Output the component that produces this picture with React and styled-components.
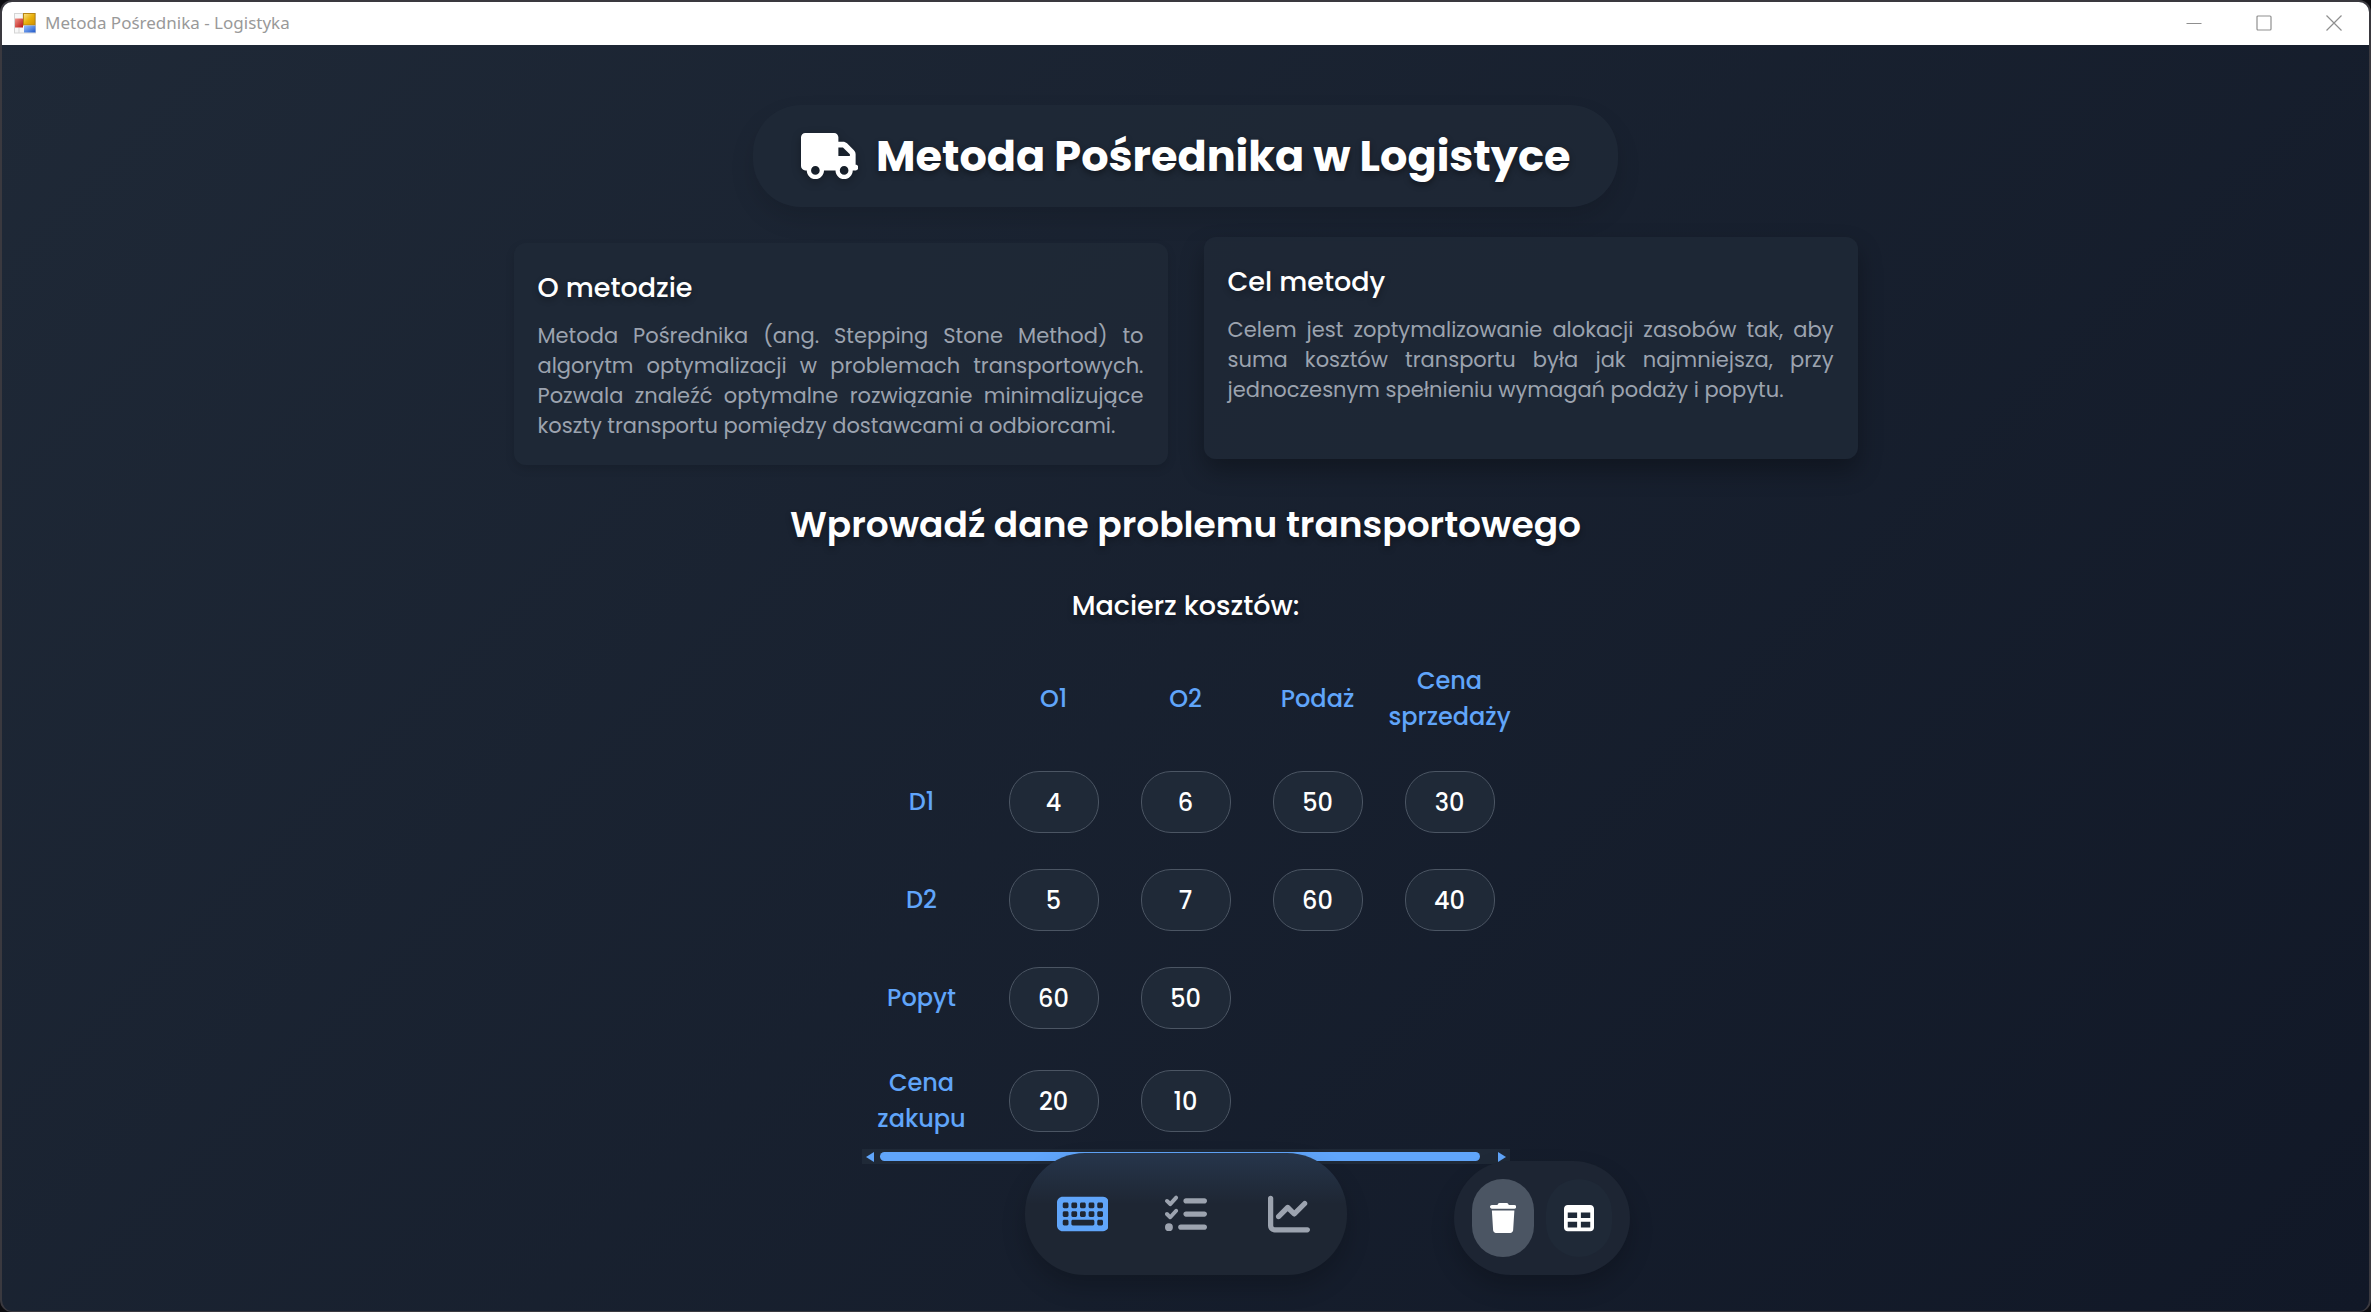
import React, { useState } from "react";
import styled, { createGlobalStyle, css } from "styled-components";
import {
  FaTruck,
  FaKeyboard,
  FaListCheck,
  FaChartLine,
  FaTrash,
  FaTable,
} from "react-icons/fa6";

const color = {
  surface: "#1f2937",
  night: "#111827",
  border: "#4b5563",
  muted: "#9ca3af",
  accent: "#60a5fa",
  text: "#ffffff",
  frame: "#3a393f",
};

const panel = css`
  background: rgba(31, 41, 55, 0.8);
`;

const GlobalStyle = createGlobalStyle`
  *, *::before, *::after { box-sizing: border-box; }
  body {
    margin: 0;
    background: #0c0c10;
    color: ${color.text};
    font-family: Poppins, Montserrat, Inter, sans-serif;
  }
  h1, h2, h3, p { margin: 0; }
  button, input { font: inherit; color: inherit; }
  button { border: 0; padding: 0; background: none; cursor: pointer; }
`;

/* Font Awesome drawings are 512 units high; $units is how wide this one is. */
const Symbol = styled.span`
  display: flex;
  font-size: ${(p) => p.$size}px;
  filter: ${(p) =>
    p.$shadow ? "drop-shadow(0 3px 4px rgba(0, 0, 0, 0.3))" : "none"};

  svg {
    width: calc(1em * ${(p) => p.$units} / 512);
    height: 1em;
  }
`;

const Window = styled.div`
  position: relative;
  display: flex;
  flex-direction: column;
  height: 100vh;
  overflow: hidden;
  border: 2px solid ${color.frame};
  border-bottom-width: 1px;
  border-radius: 12px;
  background: linear-gradient(135deg, ${color.surface}, ${color.night});
`;

const TitleBar = styled.header`
  display: flex;
  flex: none;
  align-items: center;
  height: 43px;
  padding-left: 12px;
  background: #ffffff;
  color: #999999;
`;

const WindowTitle = styled.span`
  flex: 1;
  margin-left: 9px;
  padding-bottom: 2px;
  font-family: "Noto Sans", "Open Sans", sans-serif;
  font-size: 17px;
  line-height: 24px;
`;

const WindowButton = styled.button`
  display: grid;
  place-items: center;
  width: 70px;
  height: 43px;
  padding-bottom: 2px;
`;

const Content = styled.main`
  display: flex;
  flex-direction: column;
  align-items: center;
  padding: 60px 24px 0;
`;

const Banner = styled.div`
  ${panel}
  display: flex;
  align-items: center;
  gap: 18px;
  padding: 15px 48px;
  border-radius: 48px;
  box-shadow: 0 12px 24px rgba(0, 0, 0, 0.12);
`;

const PageTitle = styled.h1`
  font-size: 43px;
  font-weight: 700;
  line-height: 72px;
  text-shadow: 0 3px 6px rgba(0, 0, 0, 0.4);
`;

const Cards = styled.div`
  display: grid;
  grid-template-columns: 1fr 1fr;
  gap: 36px;
  width: 100%;
  max-width: 1344px;
  margin-top: 36px;
`;

const Card = styled.section`
  ${panel}
  padding: 24px;
  border-radius: 12px;
  box-shadow: ${(p) =>
    p.$raised
      ? "0 12px 24px rgba(0, 0, 0, 0.3)"
      : "0 4px 10px rgba(0, 0, 0, 0.12)"};
  transform: ${(p) => (p.$raised ? "translateY(-6px)" : "none")};
`;

const Subtitle = styled.h3`
  font-size: 27px;
  font-weight: 500;
  line-height: 42px;
  text-shadow: 0 3px 6px rgba(0, 0, 0, 0.3);
`;

const CardText = styled.p`
  margin-top: 12px;
  color: ${color.muted};
  font-size: 21px;
  line-height: 30px;
  text-align: justify;
`;

const SectionTitle = styled.h2`
  margin: 36px 0;
  font-size: 36px;
  font-weight: 600;
  line-height: 48px;
  text-shadow: 0 3px 6px rgba(0, 0, 0, 0.3);
`;

const Matrix = styled.table`
  width: 660px;
  margin-top: 18px;
  table-layout: fixed;
  border-collapse: collapse;
  font-size: 24px;
  font-weight: 500;
  line-height: 36px;
  text-align: center;

  th,
  td {
    padding: 18px 0;
  }

  th {
    color: ${color.accent};
    font-weight: 500;
  }
`;

const HeadLabel = styled.span`
  display: block;
  padding: 0 4px;
`;

const RowLabel = styled.span`
  display: block;
  padding: 0 18px;
`;

const NumberBox = styled.input`
  display: block;
  width: 90px;
  height: 62px;
  margin: 0 auto;
  padding: 0;
  border: 1px solid ${color.border};
  border-radius: 30px;
  background: ${color.surface};
  text-align: center;
`;

const ScrollTrack = styled.div`
  display: flex;
  align-items: center;
  justify-content: space-between;
  width: 648px;
  height: 15px;
  margin-top: -6px;
  padding: 0 4px;
  background: ${color.surface};
`;

const ScrollThumb = styled.div`
  width: 600px;
  height: 9px;
  margin-right: 12px;
  border-radius: 5px;
  background: ${color.accent};
`;

const Arrow = styled.span`
  border: 5px solid transparent;
  border-${(p) => p.$side}: 8px solid ${color.accent};
  border-${(p) => (p.$side === "left" ? "right" : "left")}-width: 0;
`;

const Dock = styled.nav`
  position: absolute;
  bottom: 36px;
  left: 50%;
  display: flex;
  gap: 7px;
  height: 122px;
  padding: 0 10px;
  border-radius: 60px;
  background:
    linear-gradient(rgba(96, 165, 250, 0.12), rgba(96, 165, 250, 0) 42%),
    #1e2633;
  box-shadow: 0 12px 24px rgba(0, 0, 0, 0.2);
  transform: translateX(-50%);
`;

const DockButton = styled.button`
  display: grid;
  place-items: center;
  width: 96px;
  color: ${(p) => (p.$active ? color.accent : color.muted)};
`;

const Actions = styled.div`
  position: absolute;
  bottom: 36px;
  left: calc(50% + 268px);
  display: flex;
  gap: 12px;
  padding: 18px;
  border-radius: 57px;
  background: #1d2533;
  box-shadow: 0 12px 24px rgba(0, 0, 0, 0.2);
`;

const ActionButton = styled.button`
  display: grid;
  place-items: center;
  height: 78px;
  padding: 0 18px;
  border-radius: 39px;
  background: ${(p) => (p.$active ? color.border : color.surface)};
`;

const AppIcon = () => (
  <svg width="22" height="21" viewBox="0 0 22 21" aria-hidden="true">
    <defs>
      <linearGradient id="gold" x1="0" y1="0" x2="1" y2="1">
        <stop offset="0" stopColor="#fbe38a" />
        <stop offset="0.5" stopColor="#e9b10c" />
        <stop offset="1" stopColor="#d08f00" />
      </linearGradient>
      <linearGradient id="red" x1="0" y1="0" x2="1" y2="1">
        <stop offset="0" stopColor="#f0938a" />
        <stop offset="1" stopColor="#b9130f" />
      </linearGradient>
      <linearGradient id="blue" x1="0" y1="0" x2="1" y2="1">
        <stop offset="0" stopColor="#9cc3ff" />
        <stop offset="1" stopColor="#1d56c8" />
      </linearGradient>
    </defs>
    <rect x="0.5" y="0.5" width="21" height="19.5" fill="#f7f7f7" stroke="#d5d5d5" />
    <path d="M5 15v5M9 1v4" stroke="#d5d5d5" />
    <rect x="1" y="5.5" width="8" height="9" fill="url(#red)" />
    <rect x="9.5" y="0.5" width="11.5" height="11.5" fill="url(#gold)" stroke="#b98612" />
    <rect x="10" y="12.5" width="11.5" height="7" fill="url(#blue)" />
  </svg>
);

const Glyph = ({ children }) => (
  <svg
    width="16"
    height="16"
    viewBox="0 0 16 16"
    fill="none"
    stroke="#8f8f8f"
    strokeWidth="1.2"
    aria-hidden="true"
  >
    {children}
  </svg>
);

const columns = ["O1", "O2", "Podaż", "Cena sprzedaży"];

const rows = [
  { label: "D1", values: ["4", "6", "50", "30"] },
  { label: "D2", values: ["5", "7", "60", "40"] },
  { label: "Popyt", values: ["60", "50"] },
  { label: "Cena zakupu", values: ["20", "10"] },
];

const tabs = [
  { label: "Dane", Icon: FaKeyboard, units: 576 },
  { label: "Rozwiązanie", Icon: FaListCheck, units: 512 },
  { label: "Wykres", Icon: FaChartLine, units: 512 },
];

export default function App() {
  const [tab, setTab] = useState(0);

  return (
    <Window>
      <GlobalStyle />
      <TitleBar>
        <AppIcon />
        <WindowTitle>Metoda Pośrednika - Logistyka</WindowTitle>
        <WindowButton aria-label="Minimalizuj">
          <Glyph>
            <path d="M0.5 8.5h15" />
          </Glyph>
        </WindowButton>
        <WindowButton aria-label="Maksymalizuj">
          <Glyph>
            <rect x="1" y="1" width="14" height="14" rx="1" />
          </Glyph>
        </WindowButton>
        <WindowButton aria-label="Zamknij">
          <Glyph>
            <path d="M0.5 0.5l15 15M15.5 0.5l-15 15" />
          </Glyph>
        </WindowButton>
      </TitleBar>

      <Content>
        <Banner>
          <Symbol $size={46} $units={640} $shadow>
            <FaTruck />
          </Symbol>
          <PageTitle>Metoda Pośrednika w Logistyce</PageTitle>
        </Banner>

        <Cards>
          <Card>
            <Subtitle>O metodzie</Subtitle>
            <CardText>
              Metoda Pośrednika (ang. Stepping Stone Method) to algorytm
              optymalizacji w problemach transportowych. Pozwala znaleźć
              optymalne rozwiązanie minimalizujące koszty transportu pomiędzy
              dostawcami a odbiorcami.
            </CardText>
          </Card>
          <Card $raised>
            <Subtitle>Cel metody</Subtitle>
            <CardText>
              Celem jest zoptymalizowanie alokacji zasobów tak, aby suma kosztów
              transportu była jak najmniejsza, przy jednoczesnym spełnieniu
              wymagań podaży i popytu.
            </CardText>
          </Card>
        </Cards>

        <SectionTitle>Wprowadź dane problemu transportowego</SectionTitle>
        <Subtitle>Macierz kosztów:</Subtitle>

        <Matrix>
          <thead>
            <tr>
              <td />
              {columns.map((name) => (
                <th key={name} scope="col">
                  <HeadLabel>{name}</HeadLabel>
                </th>
              ))}
            </tr>
          </thead>
          <tbody>
            {rows.map((row) => (
              <tr key={row.label}>
                <th scope="row">
                  <RowLabel>{row.label}</RowLabel>
                </th>
                {columns.map((name, i) => (
                  <td key={name}>
                    {row.values[i] && (
                      <NumberBox
                        aria-label={`${row.label}, ${name}`}
                        inputMode="numeric"
                        defaultValue={row.values[i]}
                      />
                    )}
                  </td>
                ))}
              </tr>
            ))}
          </tbody>
        </Matrix>
        <ScrollTrack>
          <Arrow $side="right" />
          <ScrollThumb />
          <Arrow $side="left" />
        </ScrollTrack>
      </Content>

      <Dock>
        {tabs.map(({ label, Icon, units }, i) => (
          <DockButton
            key={label}
            aria-label={label}
            $active={i === tab}
            onClick={() => setTab(i)}
          >
            <Symbol $size={i === tab ? 46 : 42} $units={units}>
              <Icon />
            </Symbol>
          </DockButton>
        ))}
      </Dock>

      <Actions>
        <ActionButton $active aria-label="Wyczyść dane">
          <Symbol $size={30} $units={448}>
            <FaTrash />
          </Symbol>
        </ActionButton>
        <ActionButton aria-label="Rozmiar tabeli">
          <Symbol $size={30} $units={512}>
            <FaTable />
          </Symbol>
        </ActionButton>
      </Actions>
    </Window>
  );
}
